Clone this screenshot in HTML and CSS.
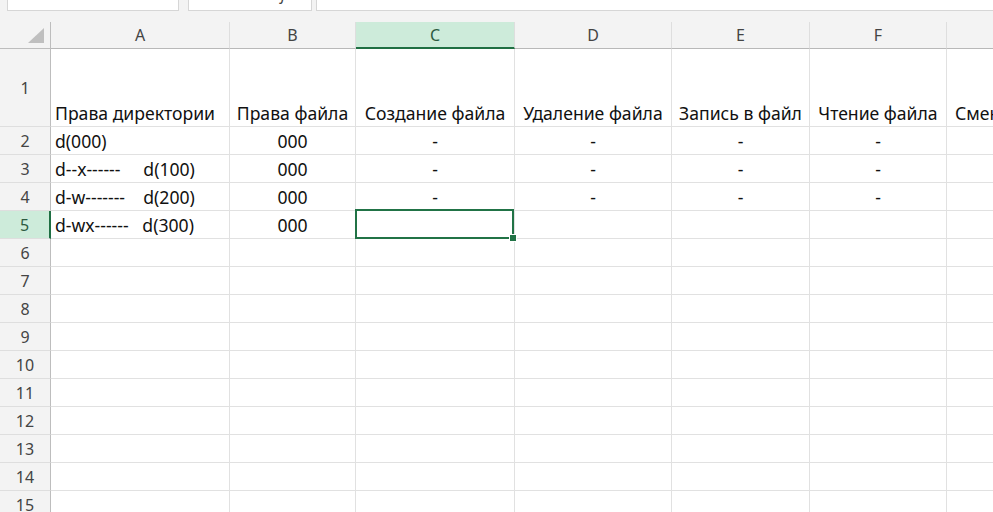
FILE: index.html
```html
<!DOCTYPE html>
<html lang="ru">
<head>
<meta charset="utf-8">
<title>Excel</title>
<link rel="stylesheet" href="styles.css">
</head>
<body>
<div class="topbar">
  <div class="box namebox">A5</div>
  <div class="box fxbox"><span>✕</span><span>✓</span><span class="fx">fx</span></div>
  <div class="box formula"></div>
</div>
<div class="spacer"></div>
<div class="sheet">
  <div class="corner"><span class="tri"></span></div>
  <div class="ch">A</div>
  <div class="ch">B</div>
  <div class="ch sel">C</div>
  <div class="ch">D</div>
  <div class="ch">E</div>
  <div class="ch">F</div>
  <div class="ch">G</div>

  <div class="rh">1</div>
  <div class="c">Права директории</div>
  <div class="c ctr">Права файла</div>
  <div class="c ctr">Создание файла</div>
  <div class="c ctr">Удаление файла</div>
  <div class="c ctr">Запись в файл</div>
  <div class="c ctr">Чтение файла</div>
  <div class="c last">Смена владельца</div>

  <div class="rh">2</div>
  <div class="c">d(000)</div>
  <div class="c ctr">000</div>
  <div class="c ctr">-</div>
  <div class="c ctr">-</div>
  <div class="c ctr">-</div>
  <div class="c ctr">-</div>
  <div class="c"></div>

  <div class="rh">3</div>
  <div class="c">d--x------     d(100)</div>
  <div class="c ctr">000</div>
  <div class="c ctr">-</div>
  <div class="c ctr">-</div>
  <div class="c ctr">-</div>
  <div class="c ctr">-</div>
  <div class="c"></div>

  <div class="rh">4</div>
  <div class="c">d-w-------    d(200)</div>
  <div class="c ctr">000</div>
  <div class="c ctr">-</div>
  <div class="c ctr">-</div>
  <div class="c ctr">-</div>
  <div class="c ctr">-</div>
  <div class="c"></div>

  <div class="rh sel">5</div>
  <div class="c">d-wx------   d(300)</div>
  <div class="c ctr">000</div>
  <div class="c active"><span class="selbox"><span class="handle"></span></span></div>
  <div class="c"></div>
  <div class="c"></div>
  <div class="c"></div>
  <div class="c"></div>

  <div class="rh">6</div><div class="c"></div><div class="c"></div><div class="c"></div><div class="c"></div><div class="c"></div><div class="c"></div><div class="c"></div>
  <div class="rh">7</div><div class="c"></div><div class="c"></div><div class="c"></div><div class="c"></div><div class="c"></div><div class="c"></div><div class="c"></div>
  <div class="rh">8</div><div class="c"></div><div class="c"></div><div class="c"></div><div class="c"></div><div class="c"></div><div class="c"></div><div class="c"></div>
  <div class="rh">9</div><div class="c"></div><div class="c"></div><div class="c"></div><div class="c"></div><div class="c"></div><div class="c"></div><div class="c"></div>
  <div class="rh">10</div><div class="c"></div><div class="c"></div><div class="c"></div><div class="c"></div><div class="c"></div><div class="c"></div><div class="c"></div>
  <div class="rh">11</div><div class="c"></div><div class="c"></div><div class="c"></div><div class="c"></div><div class="c"></div><div class="c"></div><div class="c"></div>
  <div class="rh">12</div><div class="c"></div><div class="c"></div><div class="c"></div><div class="c"></div><div class="c"></div><div class="c"></div><div class="c"></div>
  <div class="rh">13</div><div class="c"></div><div class="c"></div><div class="c"></div><div class="c"></div><div class="c"></div><div class="c"></div><div class="c"></div>
  <div class="rh">14</div><div class="c"></div><div class="c"></div><div class="c"></div><div class="c"></div><div class="c"></div><div class="c"></div><div class="c"></div>
  <div class="rh">15</div><div class="c"></div><div class="c"></div><div class="c"></div><div class="c"></div><div class="c"></div><div class="c"></div><div class="c"></div>
</div>
</body>
</html>
```

FILE: styles.css
```css
html, body {
  margin: 0;
  padding: 0;
  overflow: hidden;
}
body {
  background: #f3f3f3;
  font-family: "Noto Sans", "Open Sans", sans-serif;
  width: 993px;
  height: 512px;
}
.topbar {
  height: 11px;
  overflow: hidden;
  display: flex;
  align-items: flex-end;
  background: #f3f3f3;
}
.box {
  box-sizing: border-box;
  height: 31px;
  background: #fff;
  border: 1px solid #d6d6d6;
  border-top: none;
  padding-top: 4px;
  line-height: 20px;
  font-size: 16px;
  color: #333;
  flex: none;
}
.namebox {
  margin-left: 7px;
  width: 172px;
  padding-left: 5px;
}
.fxbox {
  margin-left: 9px;
  width: 124px;
  display: flex;
  gap: 28px;
  padding-left: 10px;
  color: #888;
}
.fxbox .fx {
  font-style: italic;
  color: #444;
}
.formula {
  margin-left: 4px;
  width: 700px;
}
.spacer {
  height: 11px;
}
.sheet {
  display: grid;
  grid-template-columns: 51px 179px 126px 159px 157px 138px 137px 160px;
  grid-template-rows: 27px 78px repeat(14, 28px);
  background: #fff;
  width: 1107px;
}
.corner, .ch, .rh, .c {
  box-sizing: border-box;
  min-width: 0;
}
.corner {
  background: #f3f3f3;
  border-right: 1px solid #bdbdbd;
  border-bottom: 1px solid #bdbdbd;
  position: relative;
}
.tri {
  position: absolute;
  right: 6px;
  bottom: 5px;
  width: 0;
  height: 0;
  border-left: 16px solid transparent;
  border-bottom: 15px solid #bfbfbf;
}
.ch {
  background: #f3f3f3;
  border-right: 1px solid #dedede;
  border-bottom: 1px solid #b8b8b8;
  text-align: center;
  font-size: 16px;
  line-height: 26px;
  color: #444;
}
.ch.sel {
  background: #cdebda;
  border-bottom: 2px solid #1f6f43;
  color: #2d5a41;
}
.rh {
  background: #f3f3f3;
  border-right: 1px solid #bdbdbd;
  border-bottom: 1px solid #dedede;
  display: flex;
  align-items: center;
  justify-content: center;
  font-size: 16px;
  color: #444;
}
.rh.sel {
  background: #cdebda;
  border-right: 2px solid #1f6f43;
  color: #2d5a41;
}
.c {
  border-right: 1px solid #e1e1e1;
  border-bottom: 1px solid #e1e1e1;
  display: flex;
  align-items: flex-end;
  padding: 0 4px 1px;
  font-size: 17.6px;
  line-height: 24px;
  color: #111;
  white-space: pre;
  overflow: visible;
}
.c.ctr {
  justify-content: center;
}
.c.last {
  padding-left: 8px;
}
.c.active {
  position: relative;
}
.selbox {
  position: absolute;
  left: -1px;
  top: -2px;
  width: 159px;
  height: 30px;
  box-sizing: border-box;
  border: 2px solid #217346;
}
.handle {
  position: absolute;
  right: -5px;
  bottom: -5px;
  width: 6px;
  height: 6px;
  background: #217346;
  border: 1px solid #fff;
}
```
